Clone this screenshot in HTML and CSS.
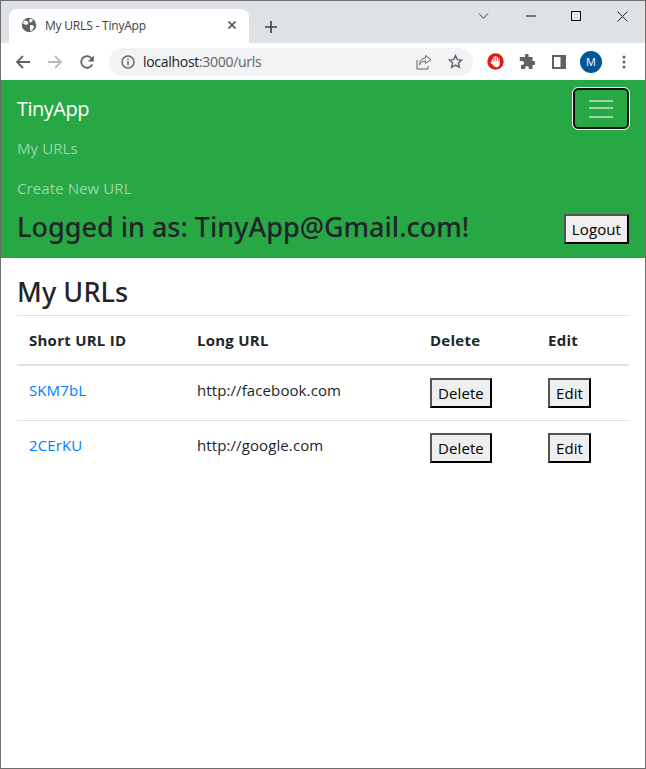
FILE: index.html
```html
<!DOCTYPE html>
<html lang="en">
<head>
    <meta charset="UTF-8">
    <title>My URLS - TinyApp</title>
    <link rel="stylesheet" href="styles.css">
</head>
<body>
<div class="window">

    <!-- tab strip -->
    <div class="tabstrip">
        <div class="tab">
            <svg class="tab-globe" width="16" height="16" viewBox="0 0 16 16">
                <circle cx="8" cy="8" r="7.2" fill="#5f6368"/>
                <path d="M3 3.5l3 .5 1.5 2-1 1.5-2 .2L2 6.5zM9 1.5l3 1.5-1 2-2 .5-1-1.5zM9 8l3.5.5.5 1.5-2 3.5-1.5.5-.5-3z" fill="#fff"/>
            </svg>
            <span class="tab-title">My URLS - TinyApp</span>
            <svg class="tab-close" width="10" height="10" viewBox="0 0 10 10">
                <path d="M1.5 1.5l7 7M8.500 1.500l-7 7" stroke="#45494d" stroke-width="1.600"/>
            </svg>
        </div>
        <svg class="new-tab" width="14" height="14" viewBox="0 0 14 14">
            <path d="M7 1v12M1 7h12" stroke="#3c4043" stroke-width="1.600"/>
        </svg>
        <div class="window-controls">
            <svg width="12" height="8" viewBox="0 0 12 8"><path d="M1 1.500l4.500 4.800L10 1.500" fill="none" stroke="#3c4043" stroke-width="1"/></svg>
            <svg class="ctl-min" width="10" height="10" viewBox="0 0 10 10"><path d="M0 5h10" stroke="#111" stroke-width="1"/></svg>
            <svg class="ctl-max" width="10" height="10" viewBox="0 0 10 10"><rect x=".5" y=".5" width="9" height="9" fill="none" stroke="#111"/></svg>
            <svg class="ctl-close" width="11" height="11" viewBox="0 0 11 11"><path d="M.5.5l10 10M10.500.5l-10 10" stroke="#222" stroke-width="1"/></svg>
        </div>
    </div>

    <!-- toolbar -->
    <div class="toolbar">
        <svg class="tool-back" width="16" height="16" viewBox="0 0 16 16"><path d="M15 8H2M8 2L2 8l6 6" fill="none" stroke="#5f6368" stroke-width="1.800"/></svg>
        <svg class="tool-forward" width="16" height="16" viewBox="0 0 16 16"><path d="M1 8h13M8 2l6 6-6 6" fill="none" stroke="#b9bbbe" stroke-width="1.800"/></svg>
        <svg class="tool-reload" width="16" height="16" viewBox="0 0 16 16"><path d="M13.200 10.500A5.800 5.800 0 1 1 12.300 4L14 6" fill="none" stroke="#5f6368" stroke-width="1.800"/><path d="M14.800 1.500v6h-6z" fill="#5f6368"/></svg>
        <div class="omnibox">
            <svg width="14" height="14" viewBox="0 0 14 14"><circle cx="7" cy="7" r="6" fill="none" stroke="#5f6368" stroke-width="1.400"/><path d="M7 6v4.200M7 3.400v1.500" stroke="#5f6368" stroke-width="1.400"/></svg>
            <span class="url"><span class="url-host">localhost</span>:3000/urls</span>
            <svg class="omni-share" width="16" height="16" viewBox="0 0 16 16"><path d="M9.500 1.500l5.500 4-5.500 4V7C6 7 4.500 8.500 3.500 11 3.500 7 5.500 4.500 9.500 4z" fill="none" stroke="#5f6368" stroke-width="1"/><path d="M1 6v9h11v-3" fill="none" stroke="#5f6368" stroke-width="1"/></svg>
            <svg class="omni-star" width="15" height="15" viewBox="0 0 15 15"><path d="M7.500 1.500l1.800 4.100 4.400.4-3.300 3 1 4.400-3.900-2.300-3.900 2.300 1-4.400-3.300-3 4.400-.4z" fill="none" stroke="#5f6368" stroke-width="1.400"/></svg>
        </div>
        <svg class="ext-block" width="17" height="17" viewBox="0 0 17 17">
            <circle cx="8.500" cy="8.500" r="8.200" fill="#e3170a"/>
            <path d="M4.800 6.200h1.200v2.400h.5V3.600h1.200v5h.5V3h1.200v5.600h.5V3.900h1.200v4.700h.5V5.600h1.100v5.400c0 2-1.300 3.200-3.100 3.200-1.500 0-2.300-.6-3-1.700L3.200 9.400l.9-.8.700.9z" fill="#fff"/>
        </svg>
        <svg class="ext-puzzle" width="16" height="16" viewBox="0 0 16 16"><path d="M6 1.500a1.800 1.800 0 0 1 3.600 0V3H13.500v4h1a2 2 0 0 1 0 4h-1v4H9.800v-1.200a1.800 1.800 0 0 0-3.600 0V15H2v-4h1a2 2 0 0 0 0-4H.8V3H6z" fill="#5f6368"/></svg>
        <svg class="ext-panel" width="14" height="14" viewBox="0 0 14 14"><rect x="1" y="1" width="12" height="12" fill="none" stroke="#5f6368" stroke-width="2"/><rect x="8.500" y="1" width="5" height="12" fill="#5f6368"/></svg>
        <div class="avatar">M</div>
        <svg class="tool-menu" width="4" height="14" viewBox="0 0 4 14"><circle cx="2" cy="2" r="1.500" fill="#5f6368"/><circle cx="2" cy="7" r="1.500" fill="#5f6368"/><circle cx="2" cy="12" r="1.500" fill="#5f6368"/></svg>
    </div>

    <!-- page -->
    <nav class="navbar">
        <div class="navbar-top">
            <a class="brand" href="#">TinyApp</a>
            <button class="toggler" type="button">
                <span class="toggler-bars"></span>
            </button>
        </div>
        <a class="nav-link" href="#">My URLs</a>
        <a class="nav-link" href="#">Create New URL</a>
        <div class="login-row">
            <h3 class="login-name">Logged in as: TinyApp@Gmail.com!</h3>
            <button class="btn" type="button">Logout</button>
        </div>
    </nav>

    <main class="content">
        <h2 class="page-title">My URLs</h2>
        <table class="url-table">
            <thead>
                <tr>
                    <th class="col-id">Short URL ID</th>
                    <th class="col-long">Long URL</th>
                    <th class="col-delete">Delete</th>
                    <th>Edit</th>
                </tr>
            </thead>
            <tbody>
                <tr>
                    <td><a href="#">SKM7bL</a></td>
                    <td>http://facebook.com</td>
                    <td><button class="btn" type="button">Delete</button></td>
                    <td><button class="btn" type="button">Edit</button></td>
                </tr>
                <tr>
                    <td><a href="#">2CErKU</a></td>
                    <td>http://google.com</td>
                    <td><button class="btn" type="button">Delete</button></td>
                    <td><button class="btn" type="button">Edit</button></td>
                </tr>
            </tbody>
        </table>
    </main>
</div>
</body>
</html>
```

FILE: styles.css
```css
* {
    box-sizing: border-box;
}

body {
    margin: 0;
    font-family: "Open Sans", "Noto Sans", sans-serif;
    font-size: 16px;
    color: #212529;
    background-color: #fff;
}

.window {
    height: 769px;
    border: 1px solid #6e6e6e;
    display: flex;
    flex-direction: column;
    overflow: hidden;
}

/* tab strip */
.tabstrip {
    height: 42px;
    flex: none;
    background-color: #dee1e6;
    display: flex;
    align-items: flex-end;
}

.tab {
    width: 240px;
    height: 34px;
    margin-left: 8px;
    padding: 0 12px 2px 12px;
    background-color: #fff;
    border-radius: 8px 8px 0 0;
    display: flex;
    align-items: center;
}

.tab-title {
    flex: 1;
    margin-left: 8px;
    font-size: 12px;
    color: #3c4043;
    letter-spacing: -0.2px;
}

.new-tab {
    margin: 0 0 9px 15px;
}

.window-controls {
    margin-left: auto;
    align-self: flex-start;
    height: 30px;
    display: flex;
    align-items: center;
    padding-right: 17px;
}

.ctl-min {
    margin-left: 36px;
}

.ctl-max {
    margin-left: 35px;
}

.ctl-close {
    margin-left: 36px;
}

/* toolbar */
.toolbar {
    height: 37px;
    flex: none;
    background-color: #fff;
    display: flex;
    align-items: center;
    padding-left: 14px;
}

.tool-forward {
    margin-left: 16px;
}

.tool-reload {
    margin-left: 16px;
}

.omnibox {
    width: 364px;
    height: 28px;
    margin-left: 14px;
    padding: 0 10px 0 12px;
    border-radius: 14px;
    background-color: #f1f3f4;
    display: flex;
    align-items: center;
}

.url {
    margin-left: 8px;
    font-size: 14px;
    color: #5f6368;
    letter-spacing: -0.3px;
    flex: 1;
}

.url-host {
    color: #202124;
}

.omni-star {
    margin-left: 16px;
}

.ext-block {
    margin-left: 14px;
}

.ext-puzzle {
    margin-left: 15px;
}

.ext-panel {
    margin-left: 17px;
}

.avatar {
    width: 22px;
    height: 22px;
    margin-left: 14px;
    border-radius: 50%;
    background-color: #01579b;
    color: #fff;
    font-size: 11px;
    line-height: 22px;
    text-align: center;
}

.tool-menu {
    margin-left: 20px;
}

/* navbar */
.navbar {
    height: 178px;
    flex: none;
    background-color: #28a745;
    padding: 8px 16px;
}

.navbar-top {
    height: 41px;
    display: flex;
    justify-content: space-between;
    align-items: center;
}

.brand {
    font-size: 20px;
    color: #fff;
    text-decoration: none;
    letter-spacing: -0.5px;
}

.toggler {
    width: 56px;
    height: 41px;
    padding: 0;
    background: none;
    border: 2px solid #111;
    border-radius: 5px;
    outline: 1px solid #fff;
    display: flex;
    align-items: center;
    justify-content: center;
}

.toggler-bars {
    display: block;
    width: 24px;
    height: 18px;
    border-top: 2px solid #9ad6a8;
    border-bottom: 2px solid #9ad6a8;
    position: relative;
}

.toggler-bars::after {
    content: "";
    position: absolute;
    left: 0;
    right: 0;
    top: 5px;
    height: 2px;
    background-color: #9ad6a8;
}

.nav-link {
    display: block;
    height: 40px;
    line-height: 40px;
    color: #9ad6a8;
    text-decoration: none;
    font-size: 15px;
    letter-spacing: 0.1px;
}

.nav-link:first-of-type {
    margin-top: -1px;
}

.login-row {
    display: flex;
    justify-content: space-between;
    align-items: flex-start;
    margin-top: 1px;
}

.login-name {
    margin: 0;
    font-family: "Noto Sans", sans-serif;
    font-size: 27px;
    font-weight: 500;
    line-height: 36px;
}

.btn {
    height: 30px;
    padding: 0 6px;
    font-family: inherit;
    font-size: 15px;
    letter-spacing: 0.1px;
    color: #000;
    background-color: #efefef;
    border: 2px solid #000;
    border-color: #555 #000 #000 #555;
    margin-top: 5px;
}

/* table */
.content {
    padding: 0 16px;
}

.page-title {
    margin: 16px 0 5px;
    font-family: "Noto Sans", sans-serif;
    font-size: 27px;
    font-weight: 500;
    line-height: 36px;
    letter-spacing: 0.1px;
}

.url-table {
    width: 100%;
    border-collapse: collapse;
    table-layout: fixed;
}

.url-table th,
.url-table td {
    padding: 12px;
    text-align: left;
    vertical-align: top;
    line-height: 24px;
    font-size: 15px;
    letter-spacing: 0.1px;
}

.url-table th {
    font-weight: 700;
    letter-spacing: 0.25px;
    border-top: 1px solid #dee2e6;
    border-bottom: 2px solid #dee2e6;
}

.url-table tbody tr + tr td {
    border-top: 1px solid #dee2e6;
}

.col-id {
    width: 168px;
}

.col-long {
    width: 233px;
}

.col-delete {
    width: 118px;
}

.url-table a {
    color: #007bff;
    text-decoration: none;
}

.url-table .btn {
    margin-top: 0;
    display: block;
}
```
